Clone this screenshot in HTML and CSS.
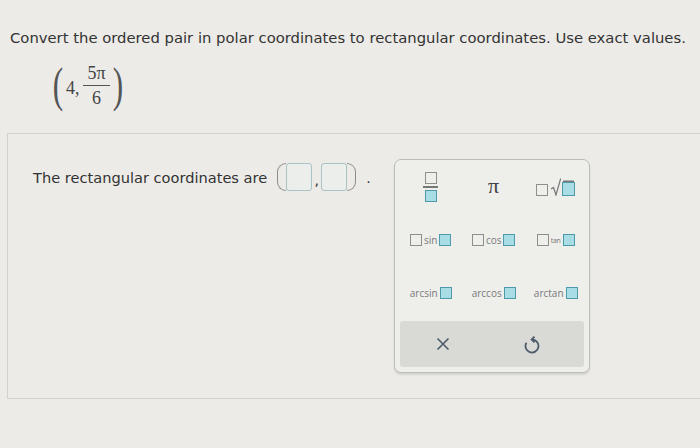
FILE: index.html
```html
<!DOCTYPE html>
<html lang="en">
<head>
    <meta charset="UTF-8">
    <title>Polar to rectangular</title>
    <link rel="stylesheet" href="styles.css">
</head>
<body>

<div class="question">
    <p class="prompt">Convert the ordered pair in polar coordinates to rectangular coordinates. Use exact values.</p>
    <div class="math">
        <span class="paren">(</span>
        <span class="num">4,</span>
        <span class="frac"><span class="top">5π</span><span class="bot">6</span></span>
        <span class="paren">)</span>
    </div>
</div>

<div class="answer">
    <div class="answer-line">
        <span class="label">The rectangular coordinates are</span>
        <span class="pair">
            <span class="bracket left"></span>
            <span class="input"></span>
            <span class="comma">,</span>
            <span class="input"></span>
            <span class="bracket right"></span>
        </span>
        <span class="dot">.</span>
    </div>

    <div class="keypad">
        <div class="keys">
            <div class="key">
                <span class="fraction-icon">
                    <span class="sq"></span>
                    <span class="bar"></span>
                    <span class="sq fill"></span>
                </span>
            </div>
            <div class="key"><span class="pi">π</span></div>
            <div class="key">
                <span class="root-icon">
                    <span class="sq"></span>
                    <svg width="10" height="18" viewBox="0 0 10 18"><path d="M0 11 L2.5 9.5 L5 17 L9.5 1 L10 1" fill="none" stroke="#777" stroke-width="1.2"/></svg>
                    <span class="sq fill over"></span>
                </span>
            </div>

            <div class="key"><span class="sq"></span><span class="fn">sin</span><span class="sq fill"></span></div>
            <div class="key"><span class="sq"></span><span class="fn">cos</span><span class="sq fill"></span></div>
            <div class="key"><span class="sq"></span><span class="fn small">tan</span><span class="sq fill"></span></div>

            <div class="key"><span class="fn">arcsin</span><span class="sq fill"></span></div>
            <div class="key"><span class="fn">arccos</span><span class="sq fill"></span></div>
            <div class="key"><span class="fn">arctan</span><span class="sq fill"></span></div>
        </div>

        <div class="actions">
            <span class="action">
                <svg width="14" height="14" viewBox="0 0 14 14"><path d="M1.5 1.5 L12.5 12.5 M12.5 1.5 L1.5 12.5" stroke="#4d5b6b" stroke-width="1.6" fill="none"/></svg>
            </span>
            <span class="action">
                <svg width="18" height="20" viewBox="0 0 18 20"><path d="M9 5.5 A6.5 6.5 0 1 1 3.4 8.7" stroke="#4d5b6b" stroke-width="1.8" fill="none"/><path d="M11.5 2.6 L8.6 5.5 L11.5 8.4" stroke="#4d5b6b" stroke-width="1.8" fill="none"/></svg>
            </span>
        </div>
    </div>
</div>

</body>
</html>
```

FILE: styles.css
```css
/* Base */
* {
    margin: 0;
    padding: 0;
    box-sizing: border-box;
}

body {
    background-color: #ecebe8;
    font-family: "DejaVu Sans", Verdana, sans-serif;
    color: #333;
    width: 700px;
    height: 448px;
    overflow: hidden;
}

/* Question */
.question {
    padding: 29px 0 0 10px;
    height: 133px;
}

.prompt {
    font-size: 14.8px;
    white-space: nowrap;
}

.math {
    display: flex;
    align-items: center;
    margin: 15px 0 0 40px;
    font-family: "Liberation Serif", "Times New Roman", serif;
    color: #444;
}

.paren {
    font-size: 48px;
    font-weight: 100;
    line-height: 48px;
    transform: scaleX(0.65);
    color: #555;
}

.num {
    font-size: 18px;
    margin: 0 4px 0 0;
    padding-top: 7px;
}

.frac {
    display: flex;
    flex-direction: column;
    align-items: center;
    font-size: 18px;
    line-height: 20px;
}

.frac .top {
    border-bottom: 1px solid #555;
    padding: 0 4px 2px;
}

.frac .bot {
    padding-top: 2px;
}

/* Answer area */
.answer {
    margin-left: 7px;
    border: 1px solid #d2d1cd;
    border-right: none;
    height: 266px;
    display: flex;
    align-items: flex-start;
    padding: 25px 0 0 25px;
}

.answer-line {
    display: flex;
    align-items: center;
    height: 36px;
}

.label {
    font-size: 14.6px;
    white-space: nowrap;
}

.pair {
    display: flex;
    align-items: center;
    margin-left: 10px;
}

.bracket {
    width: 9px;
    height: 28px;
    border: 1.5px solid #8a8f8c;
}

.bracket.left {
    border-right: none;
    border-radius: 9px 0 0 9px;
}

.bracket.right {
    border-left: none;
    border-radius: 0 9px 9px 0;
}

.input {
    width: 26px;
    height: 28px;
    border: 1.5px solid #a9c2c4;
    border-radius: 3px;
    background: #eceeec;
}

.comma {
    font-size: 14px;
    width: 9px;
    text-align: center;
    padding-top: 6px;
}

.dot {
    margin-left: 10px;
    font-size: 14px;
    padding-top: 2px;
}

/* Keypad */
.keypad {
    margin: 0 0 0 23px;
    width: 196px;
    height: 214px;
    border: 1.5px solid #bdbcb8;
    border-radius: 7px;
    background: #eeeeeb;
    box-shadow: 0 2px 2px rgba(0, 0, 0, 0.1);
    padding: 0 5px 5px 5px;
    display: flex;
    flex-direction: column;
}

.keys {
    display: grid;
    grid-template-columns: 62px 64px 60px;
    grid-template-rows: 52px 54px 52px;
    padding-top: 1px;
    margin-bottom: 2px;
}

.key {
    display: flex;
    align-items: center;
    justify-content: center;
    gap: 2px;
}

.sq {
    display: inline-block;
    width: 12px;
    height: 12px;
    border: 1.5px solid #8e8e8c;
    background: transparent;
}

.sq.fill {
    background: #a9dde6;
    border-color: #4f9aaa;
}

.fn {
    font-family: "Open Sans", "DejaVu Sans", sans-serif;
    font-size: 10px;
    color: #7a7a7a;
}

.fn.small {
    font-size: 7px;
    letter-spacing: -0.3px;
}

.fraction-icon {
    display: flex;
    flex-direction: column;
    align-items: center;
    gap: 2px;
}

.fraction-icon .bar {
    width: 15px;
    height: 1.5px;
    background: #777;
}

.pi {
    font-family: "Liberation Serif", serif;
    font-size: 22px;
    color: #444;
    margin-top: -2px;
}

.root-icon {
    display: flex;
    align-items: flex-end;
    gap: 1px;
}

.root-icon svg {
    margin-left: 2px;
}

.root-icon .over {
    width: 13px;
    height: 14px;
    box-shadow: 0 -2.5px 0 -1px #777;
}

/* Action bar */
.actions {
    flex: 1;
    display: flex;
    align-items: center;
    gap: 73px;
    background: #d9d9d6;
    border-radius: 3px;
    padding: 0 0 0 36px;
}

.action {
    display: flex;
    align-items: center;
}
```
